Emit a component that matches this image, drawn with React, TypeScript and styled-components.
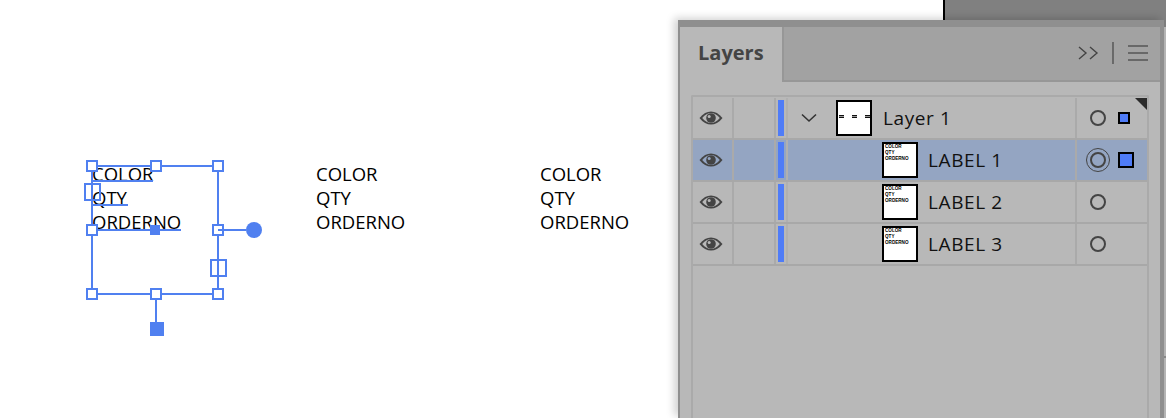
import React from "react";
import styled, { createGlobalStyle } from "styled-components";

const GlobalStyle = createGlobalStyle`
  html, body {
    margin: 0;
    padding: 0;
    background: #fff;
  }
  * {
    box-sizing: border-box;
  }
`;

const Stage = styled.div`
  position: relative;
  width: 1166px;
  height: 418px;
  overflow: hidden;
  background: #fff;
  font-family: "Open Sans", "Liberation Sans", sans-serif;
`;

const BackWindow = styled.div`
  position: absolute;
  left: 943px;
  top: 0;
  right: 0;
  height: 30px;
  background: #808080;
  border-left: 2px solid #000;
`;

const SideStrip = styled.div`
  position: absolute;
  left: 1164px;
  top: 27px;
  bottom: 0;
  width: 2px;
  background: linear-gradient(#b8b8b8 0 329px, #8c8c8c 329px 331px, #b8b8b8 331px);
`;

const Artboard = styled.div`
  display: flex;
  padding: 162px 0 0 92px;
`;

const LabelBlock = styled.div`
  position: relative;
  width: 224px;
  font-family: "Open Sans", "Liberation Sans", sans-serif;
  font-size: 18.5px;
  line-height: 24px;
  color: #000;
`;

const SelectionBox = styled.svg`
  position: absolute;
  left: -12px;
  top: -12px;
`;

const Panel = styled.div`
  position: absolute;
  left: 678px;
  top: 20px;
  width: 486px;
  height: 398px;
  display: flex;
  flex-direction: column;
  background: #b8b8b8;
  border-left: 2px solid #8f8f8f;
  border-right: 4px solid #8f8f8f;
  border-top: 7px solid #8f8f8f;
  box-shadow: -4px -2px 8px rgba(0, 0, 0, 0.18);
`;

const TabBar = styled.div`
  height: 55px;
  display: flex;
  align-items: stretch;
  background: #a2a2a2;
  border-bottom: 2px solid #979797;
`;

const Tab = styled.div`
  width: 104px;
  margin-bottom: -2px;
  padding: 10px 0 0 18px;
  background: #b8b8b8;
  border-right: 2px solid #979797;
  font-size: 20px;
  font-weight: 700;
  line-height: 32px;
  color: #444;
`;

const TabTools = styled.div`
  flex: 1;
  display: flex;
  justify-content: flex-end;
  align-items: center;
  padding: 0 12px 1px 0;
`;

const LayerList = styled.div`
  flex: 1;
  margin: 13px 11px 0;
  padding-top: 1px;
  border: solid #aaa;
  border-width: 2px 2px 0 2px;
  border-radius: 2px 2px 0 0;
`;

const Row = styled.div<{ $selected?: boolean }>`
  height: 42px;
  display: grid;
  grid-template-columns: 41px 42px 12px 1fr 70px;
  background: ${(p) => (p.$selected ? "#94a5c2" : "transparent")};
  border-bottom: 2px solid #a8a8a8;
`;

const EyeCell = styled.div`
  display: flex;
  align-items: center;
  justify-content: center;
  padding-right: 3px;
  border-right: 2px solid #aaa;
`;

const EmptyCell = styled.div`
  border-right: 2px solid #aaa;
`;

const ColorCell = styled.div`
  display: flex;
  align-items: center;
  justify-content: center;
  border-right: 2px solid #b0b0b0;
`;

const ColorBar = styled.div`
  width: 6px;
  height: 36px;
  background: #4f7cf7;
`;

const NameCell = styled.div<{ $indent: number }>`
  display: flex;
  align-items: center;
  padding-left: ${(p) => p.$indent}px;
  border-right: 2px solid #aaa;
`;

const Chevron = styled.svg`
  width: 16px;
  height: 10px;
  margin-right: 19px;
`;

const Thumb = styled.div`
  width: 36px;
  height: 36px;
  flex: none;
  background: #fff;
  border: 2px solid #000;
  overflow: hidden;
`;

const ThumbText = styled.div`
  padding-left: 1px;
  font-family: "Liberation Sans", sans-serif;
  font-size: 4.6px;
  font-weight: 700;
  line-height: 6px;
  color: #000;
`;

const ThumbMarks = styled.div`
  display: flex;
  justify-content: center;
  gap: 8px;
  padding-top: 13px;
`;

const ThumbMark = styled.div`
  width: 5px;
  height: 3px;
  background: repeating-linear-gradient(#111 0 1px, #999 1px 2px);
`;

const LayerName = styled.span<{ $gap: number }>`
  margin-left: ${(p) => p.$gap}px;
  font-size: 19px;
  letter-spacing: 0.6px;
  color: #111;
  white-space: nowrap;
`;

const TargetCell = styled.div`
  position: relative;
  display: flex;
  align-items: center;
  padding-left: 13px;
`;

const Corner = styled.div`
  position: absolute;
  right: 0;
  top: 0;
  width: 0;
  height: 0;
  border-top: 12px solid #2b2b2b;
  border-left: 12px solid transparent;
`;

const Ring = styled.div`
  width: 16px;
  height: 16px;
  border: 2px solid #444;
  border-radius: 50%;
`;

const DoubleRing = styled.div`
  width: 24px;
  height: 24px;
  margin-left: -4px;
  display: flex;
  align-items: center;
  justify-content: center;
  border: 1px solid #444;
  border-radius: 50%;
`;

const SelectSquare = styled.div<{ $size: number; $gap: number }>`
  width: ${(p) => p.$size}px;
  height: ${(p) => p.$size}px;
  margin-left: ${(p) => p.$gap}px;
  background: #4f7cf7;
  border: 2px solid #000;
`;

const Eye = ({ back = "#b8b8b8" }: { back?: string }) => (
  <svg width="24" height="14" viewBox="0 0 24 14">
    <path d="M0.5 7C4 2.4 8 0.4 12 0.4S20 2.4 23.5 7C20 11.6 16 13.6 12 13.6S4 11.6 0.5 7Z" fill="#444" />
    <path d="M3.2 7C6 3.6 9 2 12 2S18 3.6 20.8 7C18 10.4 15 12 12 12S6 10.4 3.2 7Z" fill={back} />
    <circle cx="12" cy="7" r="4.8" fill="#444" />
    <circle cx="10.2" cy="5.4" r="1.5" fill={back} />
  </svg>
);

const Selection = () => {
  const blue = "#5080f0";
  const handles: [number, number][] = [
    [12, 16], [76, 16], [138, 16],
    [12, 80], [138, 80],
    [12, 144], [76, 144], [138, 144],
  ];
  return (
    <SelectionBox width="190" height="200" viewBox="0 0 190 200">
      <g fill="none" stroke={blue} strokeWidth="2">
        <rect x="12" y="16" width="126" height="128" />
        <path d="M12 31h61M12 55h36M12 80h89" />
        <path d="M76 144v28" />
        <rect x="5" y="34" width="15" height="16" />
        <rect x="131" y="110" width="15" height="16" />
        {handles.map(([x, y]) => (
          <rect key={`${x}-${y}`} x={x - 5} y={y - 5} width="10" height="10" fill="#fff" />
        ))}
        <path d="M138 80h28" />
      </g>
      <rect x="70" y="75" width="10" height="10" fill={blue} />
      <circle cx="174" cy="80" r="8" fill={blue} />
      <rect x="70" y="172" width="14" height="14" fill={blue} />
    </SelectionBox>
  );
};

const labels = ["LABEL 1", "LABEL 2", "LABEL 3"];

export default function App() {
  return (
    <Stage>
      <GlobalStyle />
      <BackWindow />
      <SideStrip />
      <Artboard>
        {[0, 1, 2].map((i) => (
          <LabelBlock key={i}>
            COLOR
            <br />
            QTY
            <br />
            ORDERNO
            {i === 0 && <Selection />}
          </LabelBlock>
        ))}
      </Artboard>
      <Panel>
        <TabBar>
          <Tab>Layers</Tab>
          <TabTools>
            <svg width="70" height="24" viewBox="0 0 70 24">
              <path d="M1 6l7 6-7 6M12 6l7 6-7 6" fill="none" stroke="#444" strokeWidth="1.4" />
              <path d="M35 1v22" stroke="#5c5c5c" strokeWidth="1.6" />
              <path d="M50 5h20M50 12h20M50 19h20" stroke="#555" strokeWidth="1.6" />
            </svg>
          </TabTools>
        </TabBar>
        <LayerList>
          <Row>
            <EyeCell><Eye /></EyeCell>
            <EmptyCell />
            <ColorCell><ColorBar /></ColorCell>
            <NameCell $indent={13}>
              <Chevron viewBox="0 0 16 10">
                <path d="M1 1.5l7 6.5 7-6.5" fill="none" stroke="#333" strokeWidth="1.6" />
              </Chevron>
              <Thumb>
                <ThumbMarks>
                  <ThumbMark />
                  <ThumbMark />
                  <ThumbMark />
                </ThumbMarks>
              </Thumb>
              <LayerName $gap={11}>Layer 1</LayerName>
            </NameCell>
            <TargetCell>
              <Corner />
              <Ring />
              <SelectSquare $size={12} $gap={12} />
            </TargetCell>
          </Row>
          {labels.map((name, i) => (
            <Row key={name} $selected={i === 0}>
              <EyeCell>
                <Eye back={i === 0 ? "#94a5c2" : "#b8b8b8"} />
              </EyeCell>
              <EmptyCell />
              <ColorCell><ColorBar /></ColorCell>
              <NameCell $indent={94}>
                <Thumb>
                  <ThumbText>
                    COLOR
                    <br />
                    QTY
                    <br />
                    ORDERNO
                  </ThumbText>
                </Thumb>
                <LayerName $gap={10}>{name}</LayerName>
              </NameCell>
              <TargetCell>
                {i === 0 ? (
                  <>
                    <DoubleRing><Ring /></DoubleRing>
                    <SelectSquare $size={16} $gap={8} />
                  </>
                ) : (
                  <Ring />
                )}
              </TargetCell>
            </Row>
          ))}
        </LayerList>
      </Panel>
    </Stage>
  );
}
